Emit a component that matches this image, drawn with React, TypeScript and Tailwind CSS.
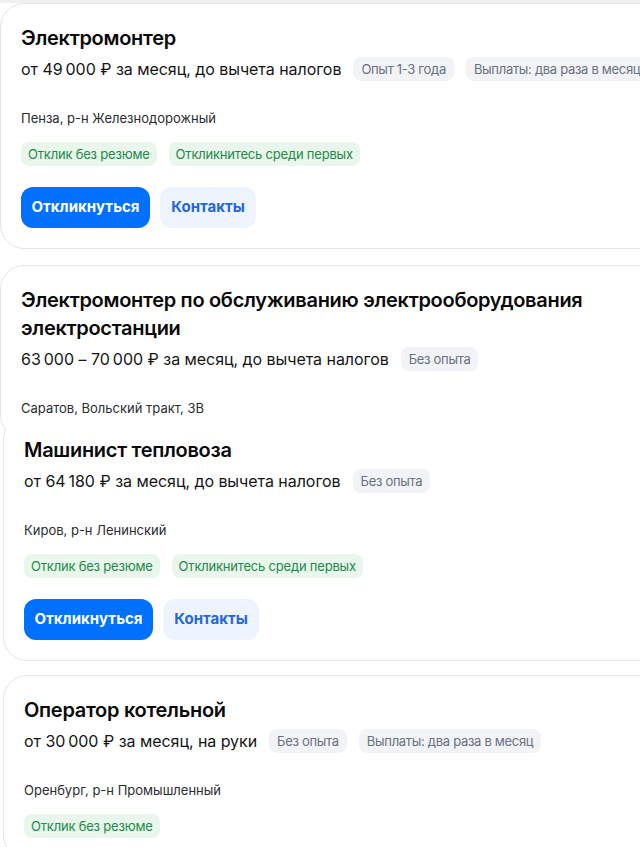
import React from "react";

type Card = {
  title: string[];
  salary: string;
  tags: string[];
  location: string;
  green?: string[];
  buttons?: boolean;
};

const GrayTag = ({ t }: { t: string }) => (
  <span className="inline-flex h-6 items-center rounded-lg bg-[#f1f3f7] px-[8px] text-[13px] leading-6 tracking-[-0.3px] text-[#6a7180] whitespace-nowrap">
    {t}
  </span>
);

const GreenTag = ({ t }: { t: string }) => (
  <span className="inline-flex h-6 items-center rounded-lg bg-[#e8f6ec] px-[7px] text-[13px] leading-6 tracking-[-0.2px] text-[#23894a] whitespace-nowrap">
    {t}
  </span>
);

function VacancyCard({ c, className = "" }: { c: Card; className?: string }) {
  return (
    <div
      className={
        "w-[700px] shrink-0 rounded-[24px] border border-[#e3e5e8] bg-white px-5 pt-5 pb-5 " +
        className
      }
    >
      <div className="text-[20px] font-semibold leading-7 text-[#0a0a0a] tracking-[-0.3px]">
        {c.title.map((l, i) => (
          <div key={i}>{l}</div>
        ))}
      </div>
      <div className="mt-[5px] flex h-6 items-center gap-3">
        <span className="text-[16px] leading-6 tracking-[-0.05px] text-[#151515] whitespace-nowrap">
          {c.salary}
        </span>
        {c.tags.map((t) => (
          <GrayTag key={t} t={t} />
        ))}
      </div>
      <div className="mt-[27px] text-[13px] leading-5 text-[#2a2c2e]">{c.location}</div>
      {c.green && (
        <div className="mt-[14px] flex gap-3">
          {c.green.map((t) => (
            <GreenTag key={t} t={t} />
          ))}
        </div>
      )}
      {c.buttons && (
        <div className="mt-[21px] flex gap-[10px]">
          <button className="h-[41px] w-[129px] rounded-xl bg-[#0070ff] text-[15px] font-bold text-white">
            Откликнуться
          </button>
          <button className="h-[41px] w-[96px] rounded-xl bg-[#edf4ff] text-[15px] font-bold text-[#2468d8]">
            Контакты
          </button>
        </div>
      )}
    </div>
  );
}

export default function App() {
  const c1: Card = {
    title: ["Электромонтер"],
    salary: "от 49\u202F000 ₽ за месяц, до вычета налогов",
    tags: ["Опыт 1-3 года", "Выплаты: два раза в месяц"],
    location: "Пенза, р-н Железнодорожный",
    green: ["Отклик без резюме", "Откликнитесь среди первых"],
    buttons: true,
  };
  const c2: Card = {
    title: ["Электромонтер по обслуживанию электрооборудования", "электростанции"],
    salary: "63\u202F000 – 70\u202F000 ₽ за месяц, до вычета налогов",
    tags: ["Без опыта"],
    location: "Саратов, Вольский тракт, 3В",
  };
  const c3: Card = {
    title: ["Машинист тепловоза"],
    salary: "от 64\u202F180 ₽ за месяц, до вычета налогов",
    tags: ["Без опыта"],
    location: "Киров, р-н Ленинский",
    green: ["Отклик без резюме", "Откликнитесь среди первых"],
    buttons: true,
  };
  const c4: Card = {
    title: ["Оператор котельной"],
    salary: "от 30\u202F000 ₽ за месяц, на руки",
    tags: ["Без опыта", "Выплаты: два раза в месяц"],
    location: "Оренбург, р-н Промышленный",
    green: ["Отклик без резюме"],
  };
  return (
    <div
      className="h-[847px] w-[640px] overflow-hidden bg-white"
      style={{ fontFamily: "Inter, 'Noto Sans', sans-serif" }}
    >
      <div className="h-[3px] bg-[#eef0f2]" />
      <div className="flex h-[427px] flex-col gap-4 overflow-hidden">
        <VacancyCard c={c1} />
        <VacancyCard c={c2} />
      </div>
      <div className="flex flex-col gap-[14px] overflow-hidden pl-[3px]">
        <VacancyCard c={c3} className="-mt-[15px]" />
        <VacancyCard c={c4} />
      </div>
    </div>
  );
}
